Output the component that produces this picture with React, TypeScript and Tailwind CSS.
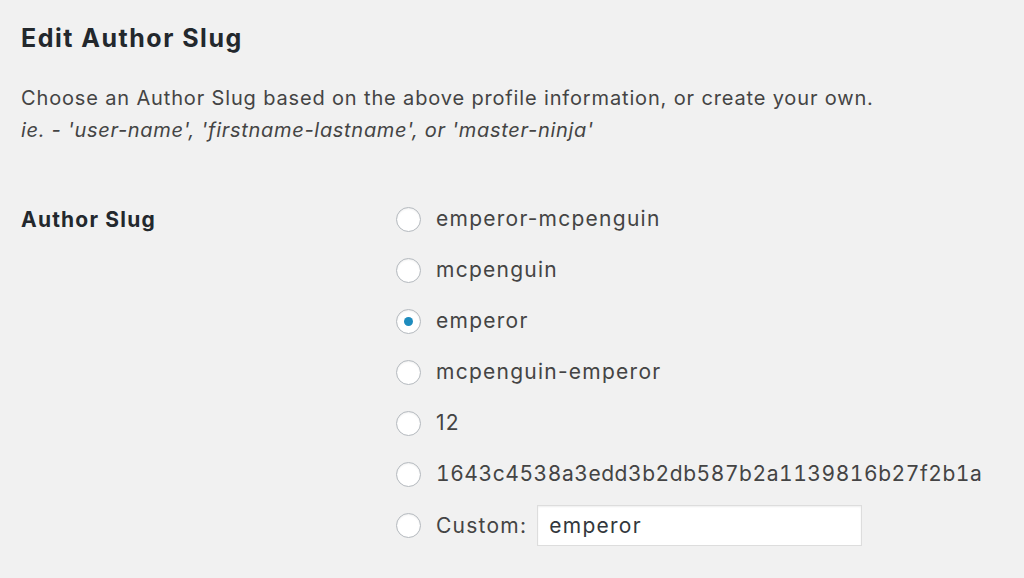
import React from "react";

const options = [
  "emperor-mcpenguin",
  "mcpenguin",
  "emperor",
  "mcpenguin-emperor",
  "12",
  "1643c4538a3edd3b2db587b2a1139816b27f2b1a",
];

const Radio: React.FC<{ checked?: boolean }> = ({ checked }) => (
  <span className="w-[25px] h-[25px] rounded-full border-[1.5px] border-[#b4b9be] bg-white flex items-center justify-center shrink-0 shadow-[inset_0_1px_2px_rgba(0,0,0,0.07)]">
    {checked && <span className="w-[9px] h-[9px] rounded-full bg-[#1e8cbe]" />}
  </span>
);

export default function App() {
  return (
    <div
      className="w-[1024px] h-[578px] bg-[#f1f1f1] pl-[21px] pt-[22px] text-[#444]"
      style={{ fontFamily: "Inter, 'Noto Sans', sans-serif" }}
    >
      {/* HEADER */}
      <h2 className="text-[25px] font-bold tracking-[1.5px] text-[#23282d] leading-[32px]">
        Edit Author Slug
      </h2>

      <p className="mt-[28px] text-[20px] tracking-[0.85px] leading-[32px]">
        Choose an Author Slug based on the above profile information, or create your own.
        <br />
        <em className="tracking-[0.7px]">ie. - 'user-name', 'firstname-lastname', or 'master-ninja'</em>
      </p>

      {/* FORM ROW */}
      <div className="flex mt-[60px]">
        <div className="w-[375px] shrink-0 text-[21px] font-bold tracking-[1.2px] text-[#23282d] leading-[26px] pt-[1px]">
          Author Slug
        </div>

        <div className="flex flex-col gap-[25.1px] text-[21px] tracking-[1.25px] leading-[26px]">
          {options.map((opt) => (
            <label key={opt} className="flex items-center gap-[15px]">
              <Radio checked={opt === "emperor"} />
              <span className={opt.length > 30 ? "tabular-nums tracking-[0.55px]" : ""}>{opt}</span>
            </label>
          ))}

          <label className="flex items-center gap-[15px]">
            <Radio />
            <span>Custom:</span>
            <span className="-ml-[5px] -my-[7.5px] w-[325px] h-[41px] bg-white border border-[#dddddd] shadow-[inset_0_1px_2px_rgba(0,0,0,0.07)] flex items-center px-[11px] text-[#32373c]">
              emperor
            </span>
          </label>
        </div>
      </div>
    </div>
  );
}
